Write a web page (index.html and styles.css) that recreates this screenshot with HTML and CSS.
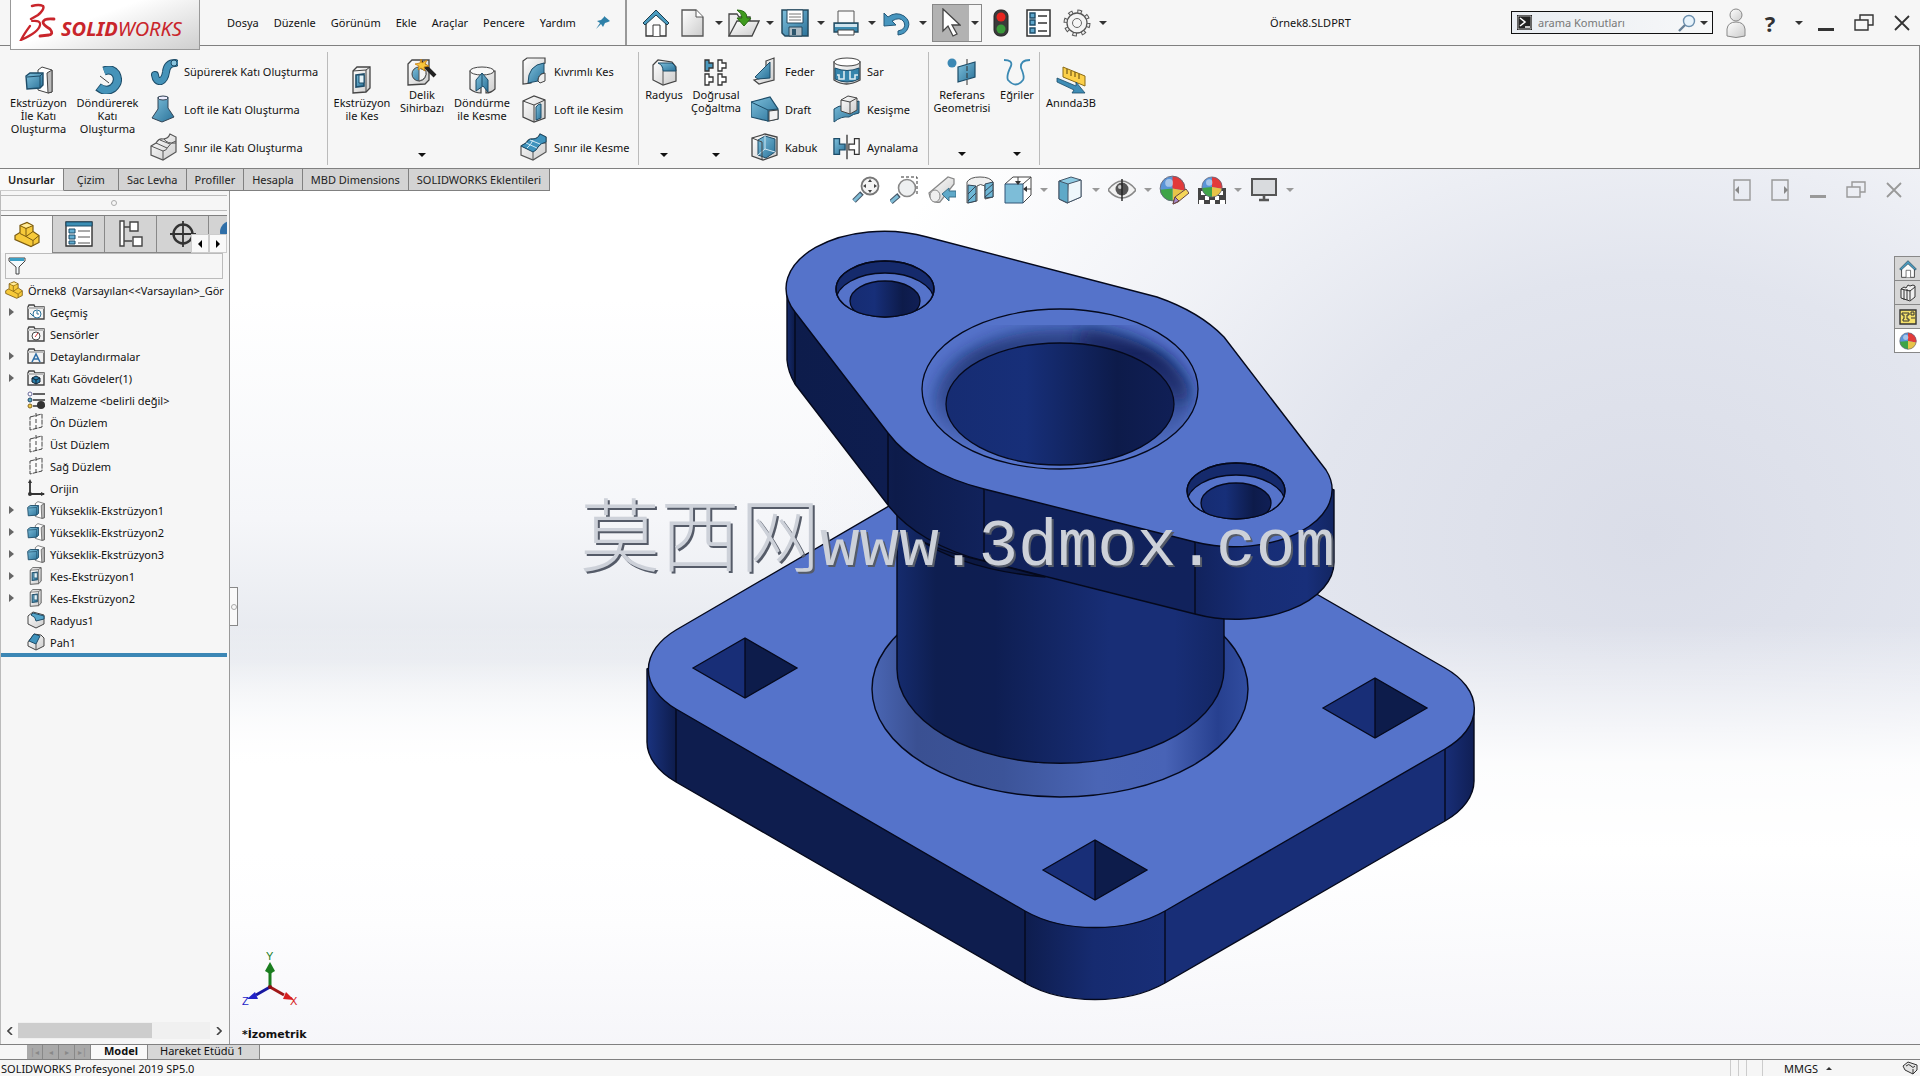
FILE: index.html
```html
<!DOCTYPE html>
<html lang="tr">
<head>
<meta charset="utf-8">
<title>Örnek8.SLDPRT</title>
<link rel="stylesheet" href="styles.css">
</head>
<body>
<svg class="defs" aria-hidden="true">
  <defs>
    <linearGradient id="blue" x1="0" y1="0" x2="1" y2="1"><stop offset="0" stop-color="#7fc0dc"/><stop offset="1" stop-color="#2a7299"/></linearGradient>
    <linearGradient id="grey" x1="0" y1="0" x2="1" y2="1"><stop offset="0" stop-color="#fff"/><stop offset="1" stop-color="#ccc"/></linearGradient>
    <symbol id="i-boss" viewBox="0 0 28 28"><path d="M13 4l4-3 10 3v22l-4 1-10-3z" fill="#fff" stroke="#444"/><path d="M22 7l5-3v22l-4 1z" fill="#bbb" stroke="#444"/><path d="M1 10l4-3h13v12l-3 3-13 1z" fill="url(#blue)" stroke="#1d4c68" stroke-width="1.4"/><path d="M2 11l13-1 3-3M15 10v12" fill="none" stroke="#1d4c68"/></symbol>
    <symbol id="i-cut" viewBox="0 0 28 28"><path d="M5 5l4-4h13v21l-4 4-13 1z" fill="url(#grey)" stroke="#444" stroke-width="1.3"/><path d="M5 5l13-1 4-3M18 4v22" fill="none" stroke="#444"/><path d="M8 9l8-1v12l-8 1z" fill="url(#blue)" stroke="#1d4c68" stroke-width="1.6"/><path d="M11 9h5v8h-5z" fill="#e4f2f8" stroke="#1d4c68"/></symbol>
    <symbol id="i-plane" viewBox="0 0 18 18"><path d="M3 4l12-3v13L3 17z" fill="#fafafa" stroke="#444" stroke-dasharray="5 1"/><path d="M9 0v18" stroke="#444" stroke-dasharray="4 2"/></symbol>
    <symbol id="i-folder" viewBox="0 0 18 18"><path d="M1 16V4l1-2h5l1 2h9v12z" fill="#f2f2f2" stroke="#444" stroke-width="1.4"/><path d="M1 4h16v2H1z" fill="#bbb"/></symbol>
    <symbol id="i-part" viewBox="0 0 26 26"><path d="M1 14l5-3V4l7-3 6 3v6l6 4v7l-8 4-16-7z" fill="#f6c93a" stroke="#7a5a10" stroke-width="1.2"/><path d="M6 4l6 3 7-3M12 7v8l-6-3M12 15l7 4 6-5M19 19v5M12 15l7-5" fill="none" stroke="#7a5a10"/><path d="M7 4l6-2 5 2-6 2z" fill="#ffec9e"/></symbol>
    <symbol id="i-home" viewBox="0 0 28 28"><path d="M4 13v14h20V13L14 4z" fill="#fbfbfb" stroke="#333" stroke-width="1.3"/><path d="M1 14L14 1l13 13-2 2L14 6 3 16z" fill="#4a9cc0" stroke="#1d3c4c"/><path d="M11 27V16h7v11" fill="#fff" stroke="#333"/></symbol>
    <symbol id="i-ball" viewBox="0 0 24 24"><circle cx="12" cy="12" r="11" fill="#5a94d8"/><path d="M12 12L12 1a11 11 0 0 1 11 13z" fill="#e23a3a"/><path d="M12 12l11 2A11 11 0 0 1 12 23z" fill="#e8c448"/><path d="M12 12v11A11 11 0 0 1 1 13z" fill="#3fa447"/><circle cx="12" cy="12" r="11" fill="none" stroke="#667" stroke-width=".8"/><circle cx="9" cy="7" r="3.500" fill="#fff" opacity=".45"/></symbol>
    <symbol id="i-restore" viewBox="0 0 20 18"><path d="M6 6V1h13v10h-5" fill="none" stroke="currentColor" stroke-width="1.4"/><path d="M1 6h13v10H1z" fill="none" stroke="currentColor" stroke-width="1.4"/></symbol>
    <symbol id="i-close" viewBox="0 0 16 16"><path d="M1 1l14 14M15 1L1 15" stroke="currentColor" stroke-width="1.8"/></symbol>
    <symbol id="i-min" viewBox="0 0 16 16"><path d="M0 14.500h16" stroke="currentColor" stroke-width="3"/></symbol>
    <symbol id="i-loft" viewBox="0 0 28 28"><path d="M8 2v12L2 23l10 4 12-5-6-9V2z" fill="url(#blue)" stroke="#345"/><ellipse cx="13" cy="3" rx="5" ry="2" fill="#eef" stroke="#345"/></symbol>
    <symbol id="i-sheet" viewBox="0 0 28 28"><path d="M1 13l5-3q3-5 7-4 5 0 7-5l6 3v15l-13 8-12-5z" fill="url(#grey)" stroke="#555" stroke-width="1.2"/><path d="M1 13l12 5v9M13 18q3 0 5-4 3-5 8-6M6 10l11 5M10 7l10 4M14 6q3 5 12 4" fill="none" stroke="#555"/></symbol>
  </defs>
</svg>

<header class="titlebar">
  <div class="logo">
    <svg width="38" height="38" viewBox="0 0 38 38" fill="none" stroke="#c9252b" stroke-width="2.500" stroke-linecap="round"><path d="M14 3q7-2 11 0 2 3-5 9l-7 4"/><path d="M14 18q9-1 8 4-1 7-19 15 3-6 9-14" stroke-width="2.200"/><path d="M36 16q-10-1-11 3 0 3 7 7 4 5-1 6l-9 1" stroke-width="2.800"/></svg>
    <span class="brand"><b>SOLID</b>WORKS</span>
  </div>
  <nav class="menu">
    <a href="#">Dosya</a><a href="#">Düzenle</a><a href="#">Görünüm</a><a href="#">Ekle</a><a href="#">Araçlar</a><a href="#">Pencere</a><a href="#">Yardım</a>
  </nav>
  <button class="pin" aria-label="Sabitle"><svg width="14" height="14" viewBox="0 0 14 14"><path d="M8 0l6 5-2 1-3 1-2 4-2-3-5 5 4-6-3-2 4-1 3-3z" fill="#2f80a8"/></svg></button>
  <div class="quick">
    <button class="tb home" aria-label="Ana sayfa"><svg width="28" height="28"><use href="#i-home"/></svg></button>
    <button class="tb" aria-label="Yeni"><svg width="24" height="28" viewBox="0 0 24 28"><path d="M1 1h14l7 7v19H1z" fill="url(#grey)" stroke="#555" stroke-width="1.3"/><path d="M15 1v7h7" fill="#fff" stroke="#555"/></svg></button><button class="caret" aria-label="Yeni seçenekleri"></button>
    <button class="tb" aria-label="Aç"><svg width="32" height="28" viewBox="0 0 32 28"><path d="M1 27V5h8l2 3h11v5" fill="#eee" stroke="#444" stroke-width="1.3"/><path d="M1 27l8-15h22l-7 15z" fill="url(#grey)" stroke="#444" stroke-width="1.3"/><path d="M9 1q10 0 10 8h4l-7 8-7-8h5q0-5-5-8z" fill="#3f9b1e" stroke="#276b10"/></svg></button><button class="caret" aria-label="Aç seçenekleri"></button>
    <button class="tb" aria-label="Kaydet"><svg width="28" height="28" viewBox="0 0 28 28"><path d="M1 1h26v26H4l-3-3z" fill="url(#blue)" stroke="#24495e" stroke-width="1.5"/><path d="M6 1h16v13H6z" fill="#fff" stroke="#24495e"/><path d="M8 5h12M8 8h12M8 11h12" stroke="#777"/><path d="M8 18h13v9H8z" fill="#aebcc4" stroke="#24495e"/><path d="M11 20h4v6h-4z" fill="#2c566d"/></svg></button><button class="caret" aria-label="Kaydet seçenekleri"></button>
    <button class="tb" aria-label="Yazdır"><svg width="26" height="26" viewBox="0 0 26 26"><path d="M5 1h16v13H5z" fill="#fafafa" stroke="#555"/><path d="M1 13h24v9H1z" fill="#3c8bb0" stroke="#24495e" stroke-width="1.3"/><path d="M2 14h22v3H2z" fill="#cfe4ee"/><path d="M5 20h16v5H5z" fill="#fff" stroke="#444"/></svg></button><button class="caret" aria-label="Yazdır seçenekleri"></button>
    <button class="tb" aria-label="Geri al"><svg width="28" height="26" viewBox="0 0 28 26"><path d="M1 3l4 4q8-6 16-1 7 5 4 12-2 6-10 7v-4q9-2 6-9-4-6-12-1l4 4-12 1z" fill="#4796bf" stroke="#24597a"/></svg></button><button class="caret" aria-label="Geri al seçenekleri"></button>
    <div class="select-tool"><button class="tb pressed" aria-label="Seç"><svg width="20" height="30" viewBox="0 0 20 30"><path d="M2 1v22l5-5 5 10 4-2-5-9h8z" fill="#fff" stroke="#444" stroke-width="1.3"/></svg></button><button class="caret narrow" aria-label="Seç seçenekleri"></button></div>
    <button class="tb wide" aria-label="Yeniden oluştur"><svg width="16" height="28" viewBox="0 0 16 28"><rect x="1" y="1" width="14" height="26" rx="6" fill="#3a3a3a" stroke="#222"/><circle cx="8" cy="8" r="4.500" fill="#e8251f"/><circle cx="8" cy="20" r="4.500" fill="#3a9a3a"/></svg></button>
    <button class="tb wide" aria-label="Dosya özellikleri"><svg width="25" height="28" viewBox="0 0 25 28"><path d="M1 1h23v26H1z" fill="#fff" stroke="#333" stroke-width="1.5"/><path d="M4 4h5v5H4zM4 11h5v5H4zM4 19h5v5H4z" fill="#5ea6cb" stroke="#1d4c68" stroke-width="1.4"/><path d="M12 7h9M12 14h9M12 22h9" stroke="#333" stroke-width="1.4"/></svg></button>
    <button class="tb wide" aria-label="Seçenekler"><svg width="28" height="28" viewBox="0 0 28 28"><circle cx="14" cy="14" r="11.500" fill="none" stroke="#555" stroke-width="4" stroke-dasharray="4.500 4.530"/><circle cx="14" cy="14" r="10" fill="#f4f4f4" stroke="#555" stroke-width="1.3"/><circle cx="14" cy="14" r="11.500" fill="none" stroke="#eee" stroke-width="2" stroke-dasharray="2.500 6.530" stroke-dashoffset="-1"/><circle cx="14" cy="14" r="4.500" fill="#f6f6f6" stroke="#666"/></svg></button><button class="caret narrow" aria-label="Seçenekler listesi"></button>
  </div>
  <h1 class="doc">Örnek8.SLDPRT</h1>
  <div class="search">
    <svg width="15" height="15" viewBox="0 0 15 15"><path d="M0 0h15v15H0z" fill="#222"/><path d="M1 1h13v13H1z" fill="none" stroke="#fff" stroke-width=".6"/><path d="M3 3l5 4-5 4M8 12h5" fill="none" stroke="#fff" stroke-width="1.600"/></svg>
    <input type="text" placeholder="arama Komutları" aria-label="arama Komutları">
    <svg width="18" height="18" viewBox="0 0 18 18"><circle cx="11" cy="7" r="5.500" fill="#e8f3fb" stroke="#6b8fae" stroke-width="1.400"/><path d="M7 11l-6 6" stroke="#667f96" stroke-width="2.400"/></svg>
    <button class="caret" aria-label="Arama türü"></button>
  </div>
  <div class="window">
    <button aria-label="Oturum aç"><svg width="20" height="30" viewBox="0 0 20 30"><path d="M1 28V21q1-7 9-7t9 7v7q-9 3-18 0z" fill="url(#grey)" stroke="#888"/><circle cx="10" cy="7" r="6" fill="url(#grey)" stroke="#888"/></svg></button>
    <button class="help" aria-label="Yardım">?</button>
    <button class="caret narrow" aria-label="Yardım listesi"></button>
    <button aria-label="Simge durumuna küçült"><svg width="16" height="16"><use href="#i-min"/></svg></button>
    <button class="spaced" aria-label="Geri yükle"><svg width="20" height="18"><use href="#i-restore"/></svg></button>
    <button class="spaced" aria-label="Kapat"><svg width="16" height="16"><use href="#i-close"/></svg></button>
  </div>
</header>

<section class="ribbon">
  <div class="group g1">
    <button class="tool"><svg width="28" height="28"><use href="#i-boss"/></svg><span>Ekstrüzyon<br>İle Katı<br>Oluşturma</span></button>
    <button class="tool"><svg width="28" height="28" viewBox="0 0 28 28"><path d="M10 5q8-3 12 3 4 8-3 14-7 5-15-1" fill="none" stroke="#1d4c68" stroke-width="9"/><path d="M10 5q8-3 12 3 4 8-3 14-7 5-14-1" fill="none" stroke="#4593b9" stroke-width="7"/><path d="M6 10l9 7" stroke="#444"/></svg><span>Döndürerek<br>Katı<br>Oluşturma</span></button>
    <div class="stack">
      <button class="row"><svg width="28" height="28" viewBox="0 0 28 28"><path d="M5 18q1 7 6 6 4-2 5-9 1-9 9-9" fill="none" stroke="#1d4c68" stroke-width="8" stroke-linecap="round"/><path d="M5 18q1 7 6 6 4-2 5-9 1-9 9-9" fill="none" stroke="#4593b9" stroke-width="6" stroke-linecap="round"/><circle cx="24" cy="6" r="3" fill="#8cc7e0" stroke="#1d4c68"/></svg>Süpürerek Katı Oluşturma</button>
      <button class="row"><svg width="28" height="28"><use href="#i-loft"/></svg>Loft ile Katı Oluşturma</button>
      <button class="row"><svg width="28" height="28"><use href="#i-sheet"/></svg>Sınır ile Katı Oluşturma</button>
    </div>
  </div>
  <div class="group g2">
    <button class="tool"><svg width="28" height="28"><use href="#i-cut"/></svg><span>Ekstrüzyon<br>ile Kes</span></button>
    <button class="tool drop"><svg width="30" height="28" viewBox="0 0 30 28"><path d="M1 6l4-4h17v20l-4 4-17 1z" fill="url(#grey)" stroke="#444" stroke-width="1.300"/><circle cx="12" cy="16" r="7" fill="url(#blue)" stroke="#444"/><path d="M12 23q8-2 7-10l-7-3z" fill="#f4f4f4" stroke="#555"/><path d="M14 4l14 14" stroke="#222" stroke-width="4"/><path d="M14 1l1 4 5-3-2 4 4 2-5 1 1 4-4-3-3 2 1-4-4-2 5-1z" fill="#f8c63c" stroke="#c77f10" stroke-width=".8"/></svg><span>Delik<br>Sihirbazı</span></button>
    <button class="tool"><svg width="28" height="28" viewBox="0 0 28 28"><path d="M2 5v18q5 4 11 4V12l2-2 3 3v14q5 0 9-4V5z" fill="url(#grey)" stroke="#444" stroke-width="1.200"/><ellipse cx="14" cy="5" rx="12" ry="4" fill="#f8f8f8" stroke="#444"/><path d="M8 25V14l6-7 6 7v12l-5-6z" fill="url(#blue)" stroke="#1d4c68"/><path d="M14 7v13" stroke="#1d4c68"/></svg><span>Döndürme<br>ile Kesme</span></button>
    <div class="stack">
      <button class="row"><svg width="28" height="28" viewBox="0 0 28 28"><path d="M3 4l4-3h18v5l-8 3q-6 3-6 17l-8 1z" fill="url(#grey)" stroke="#444" stroke-width="1.200"/><path d="M8 26Q8 8 24 6v10q-6 1-6 8z" fill="url(#blue)" stroke="#1d4c68"/><path d="M18 24q0-7 7-8v8l-5 2z" fill="#eee" stroke="#444"/></svg>Kıvrımlı Kes</button>
      <button class="row"><svg width="28" height="28" viewBox="0 0 28 28"><path d="M3 6l11-5 11 4v18l-11 4-11-5z" fill="url(#grey)" stroke="#444" stroke-width="1.200"/><path d="M3 6l11 4v17M14 10l11-5" fill="none" stroke="#444"/><path d="M16 25V12q3-4 5-3v14z" fill="url(#blue)" stroke="#1d4c68"/></svg>Loft ile Kesim</button>
      <button class="row"><svg width="28" height="28" viewBox="0 0 28 28"><use href="#i-sheet"/><path d="M1 13l5-3q3-5 7-4 5 0 7-5l6 3v5q-5 1-8 5-2 4-5 5z" fill="#3f93bd" stroke="#1d4c68"/><path d="M6 10l11 5M10 7l10 4M7 15q4-3 6-8" fill="none" stroke="#cfe8f4"/></svg>Sınır ile Kesme</button>
    </div>
  </div>
  <div class="group g3">
    <button class="tool drop"><svg width="28" height="28" viewBox="0 0 28 28"><path d="M3 7l5-5 14 2 4 5v14l-13 4-10-5z" fill="url(#grey)" stroke="#444" stroke-width="1.200"/><path d="M8 5h14q4 2 4 8H13q0-6-5-8z" fill="url(#blue)" stroke="#1d4c68"/><path d="M13 13v14" stroke="#555"/></svg><span>Radyus</span></button>
    <button class="tool drop"><svg width="28" height="28" viewBox="0 0 28 28" fill="#fff" stroke="#333" stroke-width="1.300"><path d="M3 2h4v3h4v5H7v3H3z" fill="#4a98bd"/><path d="M16 2h4v3h4v5h-4v3h-4zM3 16h4v3h4v5H7v3H3zM16 16h4v3h4v5h-4v3h-4z"/></svg><span>Doğrusal<br>Çoğaltma</span></button>
    <div class="stack">
      <button class="row"><svg width="28" height="28" viewBox="0 0 28 28"><path d="M15 4l8-3v22l-15 4-5-4 12-3z" fill="url(#grey)" stroke="#444" stroke-width="1.200"/><path d="M19 5v16L7 22 4 20z" fill="url(#blue)" stroke="#1d4c68"/></svg>Feder</button>
      <button class="row"><svg width="28" height="28" viewBox="0 0 28 28"><path d="M0 7l19-5 8 12v10l-10 2-17-4z" fill="url(#blue)" stroke="#1d4c68" stroke-width="1.200"/><path d="M0 7l17 8 10-1M17 15v12" fill="none" stroke="#1d4c68"/><path d="M18 16l9-1v9l-9 2z" fill="#f2f2f2" stroke="#444"/></svg>Draft</button>
      <button class="row"><svg width="28" height="28" viewBox="0 0 28 28"><path d="M1 5l13-4 12 3v18l-14 5-11-4z" fill="url(#grey)" stroke="#444" stroke-width="1.300"/><path d="M7 7l7-4 10 3v13l-9 6-8-3z" fill="url(#blue)" stroke="#1d4c68"/><path d="M14 3v13l-7 6M14 16l10 3" fill="none" stroke="#cfe8f4"/><path d="M1 5l10 4v18" fill="none" stroke="#444"/></svg>Kabuk</button>
    </div>
    <div class="stack">
      <button class="row"><svg width="28" height="28" viewBox="0 0 28 28"><path d="M1 5v18q12 8 26 0V5z" fill="url(#grey)" stroke="#444" stroke-width="1.300"/><ellipse cx="14" cy="5" rx="13" ry="4" fill="#fff" stroke="#444"/><path d="M2 11q12 5 24 0v11q-12 6-24 0z" fill="#3685ac" stroke="#1d4c68"/><path d="M11 14v8H6v-4H4M17 14v8h5v-4h3" fill="none" stroke="#dcebf2" stroke-width="1.600"/></svg>Sar</button>
      <button class="row"><svg width="28" height="28" viewBox="0 0 28 28"><path d="M1 14q5-4 10-3l15-5v12q-6 1-10 4-8-1-15 5z" fill="url(#blue)" stroke="#1d4c68"/><path d="M8 5l7-4 9 2v12l-7 4-9-3z" fill="url(#grey)" stroke="#444"/><path d="M8 5l9 2v12M17 7l7-4" fill="none" stroke="#444"/></svg>Kesişme</button>
      <button class="row"><svg width="28" height="28" viewBox="0 0 30 28"><path d="M1 5h6v6h6v6H7v5H1z" fill="url(#blue)" stroke="#1d4c68" stroke-width="1.400"/><path d="M28 5h-5v6h-6v6h6v5h5z" fill="#fff" stroke="#333" stroke-width="1.300"/><path d="M15 1v26" stroke="#222" stroke-width="1.300"/></svg>Aynalama</button>
    </div>
  </div>
  <div class="group g4">
    <button class="tool drop"><svg width="30" height="28" viewBox="0 0 30 28"><circle cx="5" cy="5" r="4.500" fill="#3c88b4"/><path d="M11 9l17-5v15l-17 5z" fill="url(#blue)" stroke="#1d4c68" stroke-width="1.200"/><path d="M20 1v26" stroke="#333" stroke-dasharray="5 2"/></svg><span>Referans<br>Geometrisi</span></button>
    <button class="tool drop"><svg width="28" height="28" viewBox="0 0 28 28"><path d="M1 2q9 0 7 6-5 10-3 14 8 9 15 0 2-3-2-12Q17 2 27 2" fill="none" stroke="#3b89b3" stroke-width="1.800"/></svg><span>Eğriler</span></button>
  </div>
  <div class="group g5">
    <button class="tool"><svg width="30" height="28" viewBox="0 0 30 28"><path d="M7 1l22 9v10L7 11z" fill="#fcd04a" stroke="#8a6a14"/><path d="M11 3v5M15 5v5M19 6v5M23 8v5" stroke="#5a430c"/><path d="M1 12l19 8v-4l9 11H16l2-3L1 16z" fill="#3f8db6" stroke="#1d4c68" stroke-width=".8"/></svg><span>Anında3B</span></button>
  </div>
</section>

<main class="workspace">
  <nav class="tabs">
    <button class="active">Unsurlar</button><button class="short">Çizim</button><button>Sac Levha</button><button>Profiller</button><button>Hesapla</button><button>MBD Dimensions</button><button>SOLIDWORKS Eklentileri</button>
  </nav>

  <aside class="manager">
    <div class="grip"><i></i></div>
    <div class="mtabs">
      <button class="active" aria-label="Unsur ağacı"><svg width="26" height="27"><use href="#i-part"/></svg></button>
      <button aria-label="Özellikler"><svg width="28" height="26" viewBox="0 0 28 26"><path d="M1 1h26v24H1z" fill="#fff" stroke="#333" stroke-width="1.400"/><path d="M1 1h26v4H1z" fill="#3b8fb5" stroke="#1d4c68"/><path d="M4 8h6v4H4zM4 14h6v4H4zM4 20h6v3H4z" fill="#62aed2" stroke="#1d4c68"/><path d="M13 10h12M13 16h12M13 22h12" stroke="#555"/></svg></button>
      <button aria-label="Konfigürasyonlar"><svg width="24" height="28" viewBox="0 0 24 28" fill="#fff" stroke="#444" stroke-width="1.400"><path d="M1 1h4v25H1zM5 7h6M5 21h8" /><path d="M11 2h8v9h-8zM14 17h9v9h-9z"/></svg></button>
      <button aria-label="DimXpert"><svg width="28" height="28" viewBox="0 0 28 28" fill="none" stroke="#333"><circle cx="14" cy="14" r="9.500" stroke-width="2.400"/><path d="M14 1v26M1 14h26" stroke-width="1.800"/></svg></button>
      <button class="cut" aria-label="Görüntü"><svg width="18" height="28" viewBox="0 0 18 28"><circle cx="22" cy="12" r="11" fill="#2f6fa8"/></svg></button>
      <div class="scrolltabs"><button aria-label="Önceki"><svg width="4" height="8" viewBox="0 0 4 8"><path d="M4 0v8L0 4z"/></svg></button><button aria-label="Sonraki"><svg width="4" height="8" viewBox="0 0 4 8"><path d="M0 0v8l4-4z"/></svg></button></div>
    </div>
    <div class="filter"><svg width="18" height="18" viewBox="0 0 18 18"><path d="M1 1h16v3l-6 6v7H8v-7L1 4z" fill="#f4fafd" stroke="#444"/><path d="M2 1h14v3H2z" fill="#3b9fc4"/></svg><input type="text" aria-label="Ağaç süzgeci"></div>
    <ul class="tree">
      <li class="root"><svg width="18" height="18"><use href="#i-part"/></svg>Örnek8&nbsp; (Varsayılan&lt;&lt;Varsayılan&gt;_Gör</li>
      <li><button class="exp" aria-label="Genişlet"></button><svg width="18" height="18"><use href="#i-folder"/><circle cx="10" cy="11" r="4" fill="#fff" stroke="#2a7299"/><path d="M10 8v3h2M3 10l3 3" fill="none" stroke="#2a7299"/></svg>Geçmiş</li>
      <li><i class="exp-gap"></i><svg width="18" height="18"><use href="#i-folder"/><circle cx="9" cy="11" r="4" fill="#fff" stroke="#444"/><path d="M8 12l3-4" stroke="#c33"/></svg>Sensörler</li>
      <li><button class="exp" aria-label="Genişlet"></button><svg width="18" height="18"><use href="#i-folder"/><path d="M5 15l4-8 4 8M7 12h5" fill="none" stroke="#2f6fa8" stroke-width="1.600"/></svg>Detaylandırmalar</li>
      <li><button class="exp" aria-label="Genişlet"></button><svg width="18" height="18"><use href="#i-folder"/><path d="M5 9l4-2 4 2v4l-4 2-4-2z" fill="#2a7eaa" stroke="#123"/><path d="M5 9l4 2 4-2M9 11v4" fill="none" stroke="#123"/></svg>Katı Gövdeler(1)</li>
      <li><i class="exp-gap"></i><svg width="18" height="18" viewBox="0 0 18 18"><path d="M6 3h12M6 9h12M6 15h12" stroke="#333" stroke-width="1.600"/><circle cx="3" cy="3" r="2" fill="#fff" stroke="#669"/><circle cx="3" cy="9" r="2" fill="#5ab" stroke="#246"/><circle cx="3" cy="15" r="2" fill="#ec4" stroke="#862"/><circle cx="14" cy="14" r="4" fill="#333"/></svg>Malzeme &lt;belirli değil&gt;</li>
      <li><i class="exp-gap"></i><svg width="18" height="18"><use href="#i-plane"/></svg>Ön Düzlem</li>
      <li><i class="exp-gap"></i><svg width="18" height="18"><use href="#i-plane"/></svg>Üst Düzlem</li>
      <li><i class="exp-gap"></i><svg width="18" height="18"><use href="#i-plane"/></svg>Sağ Düzlem</li>
      <li><i class="exp-gap"></i><svg width="18" height="18" viewBox="0 0 18 18"><path d="M3 2v13h14" fill="none" stroke="#333" stroke-width="1.800"/><circle cx="3" cy="15" r="2" fill="#333"/><path d="M3 0l2 4H1zM18 15l-4 2v-4z" fill="#333"/></svg>Orijin</li>
      <li><button class="exp" aria-label="Genişlet"></button><svg width="18" height="18"><use href="#i-boss"/></svg>Yükseklik-Ekstrüzyon1</li>
      <li><button class="exp" aria-label="Genişlet"></button><svg width="18" height="18"><use href="#i-boss"/></svg>Yükseklik-Ekstrüzyon2</li>
      <li><button class="exp" aria-label="Genişlet"></button><svg width="18" height="18"><use href="#i-boss"/></svg>Yükseklik-Ekstrüzyon3</li>
      <li><button class="exp" aria-label="Genişlet"></button><svg width="18" height="18"><use href="#i-cut"/></svg>Kes-Ekstrüzyon1</li>
      <li><button class="exp" aria-label="Genişlet"></button><svg width="18" height="18"><use href="#i-cut"/></svg>Kes-Ekstrüzyon2</li>
      <li><i class="exp-gap"></i><svg width="18" height="18" viewBox="0 0 18 18"><path d="M1 5l5-4 11 3v9l-8 4-8-4z" fill="url(#grey)" stroke="#444"/><path d="M6 2l11 3v3l-8 2q0-4-5-6z" fill="#55a5ca" stroke="#1d4c68"/></svg>Radyus1</li>
      <li><i class="exp-gap"></i><svg width="18" height="18" viewBox="0 0 18 18"><path d="M1 9l6-8 7 1 3 3v8l-8 4-8-4z" fill="url(#grey)" stroke="#444"/><path d="M2 8l5-7 6 2-4 8z" fill="#3f93bd" stroke="#1d4c68"/><path d="M9 11v6" stroke="#555"/></svg>Pah1</li>
    </ul>
    <div class="rollback"></div>
    <div class="hscroll"><button aria-label="Sola kaydır"><svg width="6" height="8" viewBox="0 0 6 8"><path d="M5 0L1 4l4 4" fill="none" stroke="#444" stroke-width="1.600"/></svg></button><div class="track"><div class="thumb"></div></div><button aria-label="Sağa kaydır"><svg width="6" height="8" viewBox="0 0 6 8"><path d="M1 0l4 4-4 4" fill="none" stroke="#444" stroke-width="1.600"/></svg></button></div>
  </aside>

  <section class="viewport">
    <svg class="scene" viewBox="230 169 1690 875" role="img" aria-label="Flanş modeli">
      <defs>
        <linearGradient id="cyl"><stop offset="0" stop-color="#152b6d"/><stop offset=".12" stop-color="#0e1e50"/><stop offset=".3" stop-color="#0e1e52"/><stop offset=".65" stop-color="#182e76"/><stop offset=".85" stop-color="#182e76"/><stop offset="1" stop-color="#132664"/></linearGradient>
        <linearGradient id="bore"><stop offset="0" stop-color="#162c72"/><stop offset=".35" stop-color="#172f79"/><stop offset=".75" stop-color="#0d1b4a"/><stop offset="1" stop-color="#101f56"/></linearGradient>
        <linearGradient id="chamfer"><stop offset="0" stop-color="#4a66b4"/><stop offset=".12" stop-color="#3a5092"/><stop offset=".35" stop-color="#3c5499"/><stop offset=".6" stop-color="#4a65b5"/><stop offset=".78" stop-color="#4863b6"/><stop offset=".92" stop-color="#27408f"/><stop offset="1" stop-color="#314da0"/></linearGradient>
        <linearGradient id="rim" gradientUnits="userSpaceOnUse" x1="0" y1="310" x2="0" y2="455"><stop offset="0" stop-color="#999"/><stop offset=".3" stop-color="#fff"/><stop offset=".6" stop-color="#bbb"/><stop offset="1" stop-color="#000"/></linearGradient>
        <linearGradient id="edgeSide" gradientUnits="userSpaceOnUse" x1="647" y1="0" x2="1474" y2="0"><stop offset="0" stop-color="#1a337f"/><stop offset=".034" stop-color="#0e1d4e"/><stop offset=".457" stop-color="#0e1d4e"/><stop offset=".54" stop-color="#162b70"/><stop offset=".63" stop-color="#182e77"/><stop offset=".965" stop-color="#182e77"/><stop offset="1" stop-color="#101f55"/></linearGradient>
        <linearGradient id="flangeSide" gradientUnits="userSpaceOnUse" x1="786" y1="0" x2="1334" y2="0"><stop offset="0" stop-color="#162c70"/><stop offset=".015" stop-color="#0d1c4b"/><stop offset=".18" stop-color="#0e1d4f"/><stop offset=".2" stop-color="#0d1b4a"/><stop offset=".36" stop-color="#11225b"/><stop offset=".745" stop-color="#11225c"/><stop offset=".85" stop-color="#172d75"/><stop offset=".95" stop-color="#182f7a"/><stop offset="1" stop-color="#132662"/></linearGradient>
        <filter id="soft" filterUnits="userSpaceOnUse" x="880" y="270" width="360" height="240"><feGaussianBlur stdDeviation="9"/></filter>
        <mask id="fade"><ellipse cx="1060" cy="389" rx="138" ry="80" fill="url(#rim)"/></mask>
        <clipPath id="pit"><ellipse rx="49" ry="28"/></clipPath>
        <g id="screw" stroke="#05091c" stroke-width="1.300"><ellipse rx="49" ry="28" fill="#152a6c"/><g clip-path="url(#pit)"><ellipse cy="12" rx="49" ry="28" fill="#5573ca"/><ellipse cy="12" rx="35" ry="20" fill="url(#bore)"/></g><ellipse rx="49" ry="28" fill="none"/></g>
        <g id="square"><path d="M-52 0L0-30V30z" fill="#182e77"/><path d="M0-30L52 0 0 30z" fill="#0d1c4b"/><path d="M-52 0L0-30 52 0 0 30zM0-30V30" fill="none" stroke="#05091c" stroke-width="1.300"/></g>
      </defs>
      <g stroke="#05091c" stroke-width="1.400" stroke-linejoin="round">
        <path d="M647 669V742A99 57 0 0 0 676 782L1025 983A99 57 0 0 0 1165 983L1445 821A99 57 0 0 0 1474 781V708L1094 500z" fill="url(#edgeSide)"/>
        <path d="M676 630L956 467A99 57 0 0 1 1096 467L1445 668A99 57 0 0 1 1445 749L1165 911A99 57 0 0 1 1025 911L676 709A99 57 0 0 1 676 630z" fill="#5573ca"/>
        <path d="M676 709v73M1025 911v72M1165 911v72M1445 749v72"/>
        <ellipse cx="1060" cy="689" rx="188" ry="108" fill="url(#chamfer)"/>
        <path d="M897 480V669A163 94 0 0 0 1224 669V480z" fill="url(#cyl)"/>
        <path d="M787 288V360Q788 372 795 384L888 505A187 108 0 0 0 984 561L1195 614A98 57 0 0 0 1334 562V490z" fill="url(#flangeSide)"/>
        <path d="M920 540Q965 570 1045 577L984 561Q945 553 920 540z" fill="#0b1842"/>
        <path d="M927 237L1157 297A187 108 0 0 1 1224 337L1326 470A98 57 0 0 1 1195 542L984 489A187 108 0 0 1 888 433L795 312A98 57 0 0 1 927 237z" fill="#5573ca"/>
        <path d="M795 312v72M888 433v72M984 489v72M1195 542v72"/>
      </g>
      <use href="#square" x="745" y="668"/><use href="#square" x="1375" y="708"/><use href="#square" x="1095" y="870"/>
      <use href="#screw" x="885" y="289"/><use href="#screw" x="1236" y="491"/>
      <g mask="url(#fade)"><ellipse cx="1062" cy="404" rx="116" ry="64" fill="none" stroke="#10215a" stroke-width="20" opacity=".85" filter="url(#soft)"/><path d="M1080 338Q1165 350 1182 400" fill="none" stroke="#0e1d52" stroke-width="20" filter="url(#soft)"/></g>
      <ellipse cx="1060" cy="389" rx="138" ry="80" fill="none" stroke="#05091c" stroke-width="1.300"/>
      <ellipse cx="1060" cy="404" rx="114" ry="61" fill="url(#bore)" stroke="#05091c" stroke-width="1.300"/>
      <text class="mark" x="580" y="565"><tspan class="mark-cjk">莫西网</tspan><tspan class="mark-latin">www.3dmox.com</tspan></text>
    </svg>
    <div class="hud">
      <div class="views">
        <button aria-label="Sığdır"><svg width="28" height="28" viewBox="0 0 28 28"><path d="M10 17l-8 8" stroke="#456" stroke-width="5"/><path d="M9 18l-7 7" stroke="#7fbcd6" stroke-width="3"/><circle cx="18" cy="10" r="8.500" fill="#f4f4f4" stroke="#777" stroke-width="1.800"/><path d="M18 3l2 3h-4zM18 17l2-3h-4zM11 10l3-2v4zM25 10l-3-2v4z" fill="#444"/></svg></button>
        <button aria-label="Alana yakınlaştır"><svg width="28" height="28" viewBox="0 0 28 28"><path d="M11 1h16v17" fill="none" stroke="#333" stroke-dasharray="3 2"/><path d="M9 19l-8 7" stroke="#456" stroke-width="5"/><path d="M8 20l-7 6" stroke="#7fbcd6" stroke-width="3"/><circle cx="17" cy="12" r="8.500" fill="#eef0f1" stroke="#888" stroke-width="1.600"/></svg></button>
        <button aria-label="Önceki görünüm"><svg width="28" height="28" viewBox="0 0 28 28"><path d="M1 17L20 1l6 2v5L12 26q-9 2-11-9z" fill="url(#grey)" stroke="#888" stroke-width="1.300"/><ellipse cx="7" cy="20" rx="5" ry="6" fill="#eee" stroke="#888"/><path d="M14 18l7-6v3h7v6h-7v4z" fill="#5fa9c9" stroke="#3b6f88"/></svg></button>
        <button aria-label="Kesit görünümü"><svg width="28" height="28" viewBox="0 0 28 28"><path d="M1 6q3-5 13-5t13 5v15l-8 2V10q-5-3-8 0v15l-10 2z" fill="#f0f0f0" stroke="#555"/><path d="M2 9l8 1v15l-8 2zM19 8l8-2v15l-8 1z" fill="#6eb7d6" stroke="#345"/><path d="M2 18l8-8M2 25l8-8M19 15l8-7M19 21l8-7" stroke="#345"/></svg></button>
        <button aria-label="Görünüm yönü"><svg width="28" height="28" viewBox="0 0 28 28"><path d="M1 8l8-7h18v18l-8 8M27 1l-8 7M14 1v6M27 13h-7" fill="#fff" stroke="#444"/><path d="M1 8h18v19H1z" fill="#7dbdd8" stroke="#357"/><path d="M14 9l-3-4h6zM19 13l4-3v6z" fill="#333"/></svg></button><button class="caret light" aria-label="Yön listesi"></button>
        <button aria-label="Görüntü stili"><svg width="28" height="28" viewBox="0 0 28 28"><path d="M3 5l12-4 10 3v17l-14 6-8-4z" fill="#8ecbe3" stroke="#456"/><path d="M12 8l13-4v17l-14 6z" fill="#eef7fb" stroke="#456"/><path d="M3 5l9 3v19l-9-4z" fill="#5ea9c8" stroke="#456"/></svg></button><button class="caret light" aria-label="Stil listesi"></button>
        <button aria-label="Gizle/göster"><svg width="28" height="24" viewBox="0 0 28 24"><path d="M0 12Q14-6 28 12 14 28 0 12z" fill="#f2f2f2" stroke="#888" stroke-width="1.600"/><circle cx="14" cy="11" r="6.500" fill="#555"/><circle cx="12" cy="9" r="2" fill="#ccc"/><path d="M14 1v22" stroke="#222" stroke-width="1.400"/></svg></button><button class="caret light" aria-label="Gizle/göster listesi"></button>
        <button aria-label="Görünüşü düzenle"><svg width="30" height="30" viewBox="0 0 30 30"><use href="#i-ball" width="27" height="27"/><path d="M14 29l2-7 11-8 3 4-11 9z" fill="#f5d558" stroke="#644"/><path d="M14 29l2-7 4 4z" fill="#a88bd0" stroke="#644"/></svg></button>
        <button aria-label="Sahne uygula"><svg width="28" height="28" viewBox="0 0 28 28"><path d="M0 12h28v16H0z" fill="#444"/><path d="M3 15h4v4H3zM21 15h4v4h-4zM7 20h4v4H7zM17 20h4v4h-4zM1 24h5v4H1zM12 24h5v4h-5zM22 24h5v4h-5z" fill="#fff"/><use href="#i-ball" x="3" width="22" height="22"/></svg></button><button class="caret light" aria-label="Sahne listesi"></button>
        <button aria-label="Görünüm ayarları"><svg width="26" height="24" viewBox="0 0 26 24"><path d="M1 1h24v16H1z" fill="#d9dbde" stroke="#555" stroke-width="2"/><path d="M13 17v4M8 22h10" stroke="#555" stroke-width="2.600"/></svg></button><button class="caret light" aria-label="Ayar listesi"></button>
      </div>
      <div class="docwin">
        <button aria-label="Sol bölme"><svg width="18" height="22" viewBox="0 0 18 22"><path d="M1 1h16v20H1z" fill="none" stroke="#999" stroke-width="1.400"/><path d="M2 11l4-4v8z" fill="#888"/></svg></button>
        <button aria-label="Sağ bölme"><svg width="18" height="22" viewBox="0 0 18 22"><path d="M1 1h16v20H1z" fill="none" stroke="#999" stroke-width="1.400"/><path d="M17 11l-4-4v8z" fill="#888"/></svg></button>
        <button aria-label="Belgeyi küçült"><svg width="16" height="18"><use href="#i-min"/></svg></button>
        <button aria-label="Belgeyi geri yükle"><svg width="20" height="18"><use href="#i-restore"/></svg></button>
        <button aria-label="Belgeyi kapat"><svg width="16" height="16"><use href="#i-close"/></svg></button>
      </div>
    </div>
    <div class="taskpane">
      <button aria-label="Kaynaklar"><svg width="18" height="18"><use href="#i-home"/></svg></button>
      <button aria-label="Tasarım kitaplığı"><svg width="16" height="18" viewBox="0 0 16 18" fill="#eee" stroke="#333"><path d="M1 5l3-2 2 1 2-3 2 1 3-1 2 1v11l-5 4-9-3z"/><path d="M4 6v10M7 5v11M10 6v10M1 5l9 2 5-4" fill="none"/></svg></button>
      <button aria-label="Görünüm paleti"><svg width="18" height="16" viewBox="0 0 18 16"><path d="M1 1h16v14H1z" fill="#f5e06a" stroke="#333" stroke-width="1.400"/><path d="M3 4h7v2H8v4h2v2H4v-2h1V6H3zM12 3h3v3h-3zM12 9h4" fill="none" stroke="#333"/></svg></button>
      <button class="active" aria-label="Görünüşler"><svg width="18" height="18"><use href="#i-ball"/></svg></button>
    </div>
    <button class="flyout" aria-label="Paneli daralt"><i></i></button>
    <div class="orient">
      <svg width="60" height="60" viewBox="0 0 60 60"><path d="M28 37V18" stroke="#1a7d1f" stroke-width="3"/><path d="M28 12l5 9-5 3-5-3z" fill="#1a7d1f"/><path d="M28 37l14 8" stroke="#a01818" stroke-width="3"/><path d="M52 50l-11-1 3-7z" fill="#d62020"/><path d="M28 37l-14 8" stroke="#1818a0" stroke-width="3"/><path d="M5 49l11 0-3-7z" fill="#2222c8"/><circle cx="28" cy="37" r="2" fill="#811"/><text x="24" y="10" fill="#1a7d1f">Y</text><text x="48" y="55" fill="#d62020">X</text><text x="0" y="55" fill="#2222c8">Z</text></svg>
      <p>*İzometrik</p>
    </div>
  </section>
</main>

<nav class="bottom">
  <div class="steps"><button aria-label="İlk">|◂</button><button aria-label="Önceki">◂</button><button aria-label="Sonraki">▸</button><button aria-label="Son">▸|</button></div>
  <button class="sheet active">Model</button><button class="sheet">Hareket Etüdü 1</button>
</nav>
<footer class="status">
  <span>SOLIDWORKS Profesyonel 2019 SP5.0</span>
  <div class="units"><i></i><i></i><i></i><i></i><button>MMGS</button><span class="up"></span><svg width="16" height="14" viewBox="0 0 16 14"><path d="M1 5l5-4 9 3v5l-4 4-8-4z" fill="#e4e4e4" stroke="#333"/><path d="M4 5q3-3 5 0t4 0M11 8v5" fill="none" stroke="#333"/></svg></div>
</footer>
</body>
</html>
```
FILE: styles.css
```css
* { box-sizing: border-box; }
body {
  margin: 0;
  height: 100vh;
  display: flex;
  flex-direction: column;
  overflow: hidden;
  background: #f6f6f6;
  color: #111;
  font: 11px/13px "Noto Sans", "Noto Sans CJK SC", sans-serif;
}
button {
  border: 0;
  padding: 0;
  background: none;
  color: inherit;
  font: inherit;
}
svg { flex: none; display: block; }
.defs { position: absolute; width: 0; height: 0; }

.caret { width: 18px; align-self: stretch; display: grid; place-items: center; color: #333; }
.caret::after, .drop::after {
  content: "";
  border: 4px solid transparent;
  border-top-color: currentColor;
  border-bottom: 0;
}
.caret.narrow { width: 14px; }
.caret.light { width: 14px; color: #999; }

/* title bar */
.titlebar {
  flex: none;
  display: flex;
  align-items: center;
  height: 46px;
  border-bottom: 1px solid #808080;
}
.logo {
  flex: none;
  align-self: flex-start;
  position: relative;
  z-index: 2;
  display: flex;
  align-items: flex-start;
  gap: 5px;
  width: 190px;
  height: 50px;
  margin: 0 27px -4px 10px;
  padding: 3px 0 0 7px;
  border: 1px solid #999;
  border-top: 0;
  background: linear-gradient(160deg, #fff 40%, #cfcfcf);
}
.brand {
  padding-top: 13px;
  color: #c9252b;
  font-size: 20px;
  line-height: 26px;
  font-style: italic;
}
.menu { display: flex; gap: 15px; }
.menu a { color: inherit; text-decoration: none; }
.pin { width: 44px; margin-left: 5px; display: grid; place-items: center; }
.quick {
  display: flex;
  align-self: stretch;
  align-items: center;
  padding-left: 13px;
  border-left: 2px solid #999;
}
.tb { width: 33px; height: 36px; display: grid; place-items: center; }
.tb.home { margin-right: 4px; }
.tb.wide { width: 38px; }
.select-tool { display: flex; height: 38px; border: 1px solid #888; }
.select-tool .tb { width: 36px; }
.select-tool .caret { width: 12px; }
.pressed { background: #b2b2b2; }
.doc { flex: 1; margin: 0; font-size: 11px; font-weight: 400; text-align: center; }
.search {
  display: flex;
  align-items: center;
  width: 202px;
  height: 23px;
  margin-right: 5px;
  padding-left: 5px;
  border: 1px solid #111;
  background: linear-gradient(90deg, #e9edf2, #f7f8f9);
}
.search input {
  flex: 1;
  min-width: 0;
  border: 0;
  padding: 0 6px;
  background: none;
  font: inherit;
}
.search input::placeholder { color: #777; opacity: 1; }
.search .caret { width: 16px; }
.window { display: flex; align-items: center; width: 202px; gap: 14px; color: #333; padding-left: 8px; }
.window .help { width: 20px; font: 700 22px/26px "Noto Sans", sans-serif; }
.window .caret.narrow { width: 10px; }
.window .spaced { margin-left: 6px; }

/* command ribbon */
.ribbon {
  flex: none;
  display: flex;
  height: 123px;
  padding: 6px 0 3px;
  border-bottom: 1px solid #808080;
  border-right: 1px solid #888;
}
.group { display: grid; border-right: 1px solid #bbb; }
.g1 { grid-template-columns: 69px 69px 1fr; width: 328px; padding-left: 4px; }
.g2 { grid-template-columns: 60px 60px 60px 1fr; width: 311px; padding-left: 4px; }
.g3 { grid-template-columns: 50px 54px 82px 1fr; width: 290px; }
.g4 { grid-template-columns: 66px 44px; width: 111px; }
.g5 { grid-template-columns: 62px; border: 0; }
.tool {
  display: flex;
  flex-direction: column;
  align-items: center;
  gap: 2px;
  padding-top: 14px;
  text-align: center;
  white-space: nowrap;
}
.tool.drop { padding-top: 6px; }
.drop::after { margin-top: auto; margin-bottom: 9px; }
.stack { display: grid; grid-template-rows: repeat(3, 38px); align-content: start; padding-left: 8px; }
.row { display: flex; align-items: center; gap: 6px; white-space: nowrap; }

/* work area */
.workspace {
  flex: 1;
  min-height: 0;
  display: grid;
  grid-template-columns: 230px 1fr;
  grid-template-rows: 22px 1fr;
}
.tabs { grid-area: 1 / 1 / 2 / 3; z-index: 2; display: flex; justify-self: start; }
.tabs button {
  padding: 0 8px;
  border: solid #808080;
  border-width: 0 1px 1px 0;
  background: #d3d3d3;
  color: #222;
}
.tabs .short { padding: 0 13px; }
.tabs .active { background: #f9f9f9; font-weight: 600; border-bottom-color: #ccc; }

.manager {
  grid-area: 2 / 1 / 3 / 2;
  min-width: 0;
  display: flex;
  flex-direction: column;
  padding-right: 2px;
  border-right: 1px solid #999;
  border-left: 1px solid #bbb;
}
.grip { flex: none; display: grid; place-items: center; height: 16px; margin: 4px 0; border: solid #bbb; border-width: 1px 0; }
.grip i, .flyout i { width: 6px; height: 6px; border: 1px solid #aaa; border-radius: 50%; }
.mtabs { flex: none; position: relative; display: flex; height: 38px; border-top: 1px solid #808080; overflow: hidden; }
.mtabs > button { width: 52px; display: grid; place-items: center; border: solid #888; border-width: 0 1px 1px 0; background: #d3d3d3; }
.mtabs > .active { border-bottom: 0; background: #f9f9f9; }
.mtabs > .cut { width: 18px; border-right: 0; }
.scrolltabs { position: absolute; right: 0; bottom: 0; display: flex; }
.scrolltabs button { width: 18px; height: 19px; display: grid; place-items: center; border: 1px solid #ccc; background: #f9f9f9; }
.filter { flex: none; display: flex; align-items: center; height: 26px; margin: 0 4px; padding-left: 2px; border: 1px solid #bbb; }
.filter input { flex: 1; min-width: 0; border: 0; background: none; }
.tree { flex: none; margin: 0; padding: 0; list-style: none; overflow: hidden; }
.tree li { display: flex; align-items: center; gap: 5px; height: 22px; white-space: nowrap; }
.tree .root { padding-left: 4px; }
.exp, .exp-gap { flex: none; width: 21px; height: 22px; display: grid; place-items: center; padding-right: 1px; }
.exp::after { content: ""; border: 4px solid transparent; border-left: 5px solid #666; border-right: 0; }
.rollback { flex: none; height: 4px; background: #3c87b5; }
.hscroll { flex: none; display: flex; height: 17px; margin-top: auto; margin-bottom: 5px; }
.hscroll button { width: 17px; display: grid; place-items: center; }
.track { flex: 1; background: #f0f0f0; }
.thumb { width: 70%; height: 15px; margin-top: 1px; background: #cdcdcd; }

.viewport {
  grid-area: 1 / 2 / 3 / 3;
  position: relative;
  min-width: 0;
  background:
    linear-gradient(180deg, rgba(255,255,255,0) 52%, rgba(255,255,255,.9) 68%, #fff 78%, rgba(253,253,254,.9) 86%, rgba(245,245,249,.9) 100%),
    radial-gradient(ellipse 50% 75% at 84% 42%, #dadde8 0, #e2e5ee 40%, rgba(236,238,244,.8) 65%, rgba(255,255,255,0) 100%),
    linear-gradient(180deg, #fff 15%, #f5f6f9 40%, #e5e8ee 56%, #fff 68%);
}
.scene { position: absolute; inset: 0; width: 100%; height: 100%; }
.mark { fill: #cdd1d9; filter: drop-shadow(2px 2px 0 #555b68); }
.mark-cjk { font: 300 80px "Noto Sans CJK SC", sans-serif; }
.mark-latin { font: 400 66px "Liberation Mono", monospace; }
.hud { position: relative; display: grid; grid-template-columns: 1fr auto 1fr; height: 42px; padding-right: 7px; }
.views { grid-column: 2; display: flex; }
.views button:not(.caret), .docwin button { width: 38px; display: grid; place-items: center; }
.docwin { justify-self: end; display: flex; color: #999; }
.taskpane { position: relative; width: 26px; margin: 45px 0 0 auto; border: solid #888; border-width: 1px 0 0 1px; }
.taskpane button { display: grid; place-items: center; width: 100%; height: 24px; border-bottom: 1px solid #888; background: #d6d6d6; }
.taskpane .active { background: #fff; }
.flyout {
  position: absolute;
  left: 0;
  top: 418px;
  width: 8px;
  height: 39px;
  display: grid;
  place-items: center;
  border: 1px solid #888;
  border-left: 0;
  background: #f9f9f9;
}
.orient { position: absolute; left: 12px; bottom: 2px; }
.orient text { font: 11px "Liberation Sans", sans-serif; }
.orient p { margin: 18px 0 0; font: 700 11px/14px "DejaVu Sans", sans-serif; }

/* bottom tabs and status bar */
.bottom { flex: none; display: flex; height: 16px; padding-left: 27px; border: solid #808080; border-width: 1px 0; }
.steps { display: flex; width: 64px; background: #a9a9a9; }
.steps button { flex: 1; border-right: 1px solid #888; color: #888; font-size: 8px; line-height: 14px; }
.sheet { padding: 0 16px 2px 12px; border-right: 1px solid #888; background: #d6d6d6; line-height: 12px; }
.sheet.active { padding: 0 9px 2px 13px; background: #f9f9f9; font-weight: 700; }
.status { flex: none; display: flex; justify-content: space-between; align-items: center; height: 16px; padding: 0 2px 0 1px; }
.units { display: flex; align-items: center; }
.units i { width: 8px; height: 16px; border-left: 1px solid #ccc; }
.units i:nth-child(4) { margin-left: 8px; width: 22px; }
.up { margin: 0 70px 0 8px; border: 3px solid transparent; border-bottom-color: #333; border-top: 0; }
```
